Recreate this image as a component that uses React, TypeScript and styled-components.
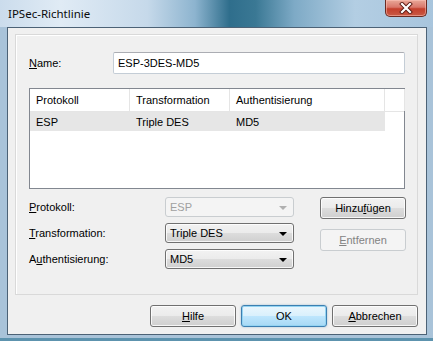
import React from "react"
import styled, { createGlobalStyle } from "styled-components"

const GlobalStyle = createGlobalStyle`
    html, body {
        margin: 0;
        padding: 0;
        background: #ffffff;
    }
    body {
        font-family: "Liberation Sans", Arial, sans-serif;
        font-size: 11px;
        color: #000;
    }
`

const Window = styled.div`
    width: 433px;
    height: 341px;
    box-sizing: border-box;
    display: flex;
    flex-direction: column;
    background-color: #a9c3d9;
    border-bottom: 3px solid #5d93ae;
`

const TitleBar = styled.div`
    position: relative;
    height: 27px;
    display: flex;
    align-items: flex-start;
    justify-content: space-between;
    padding-left: 8px;
    background-color: #c3d7e9;
`

// aero glass streak drawn behind the caption
const Glass = styled.svg`
    position: absolute;
    left: 0;
    top: 0;
    width: 100%;
    height: 100%;
    z-index: 0;
`

const Title = styled.span`
    position: relative;
    z-index: 1;
    font-family: "Noto Sans", "Liberation Sans", sans-serif;
    font-size: 11.5px;
    line-height: 12px;
    margin-top: 8px;
    color: #0c0c0c;
`

const CloseButton = styled.div`
    position: relative;
    z-index: 1;
    width: 42px;
    height: 17px;
    margin-right: 6px;
    box-sizing: border-box;
    border: 1px solid #6b2b22;
    border-top: none;
    border-radius: 0 0 5px 5px;
    background: linear-gradient(180deg, #e9a898 0%, #d9776a 45%, #c43f2c 55%, #c85a45 100%);
    box-shadow: inset 0 0 0 1px rgba(255,200,190,0.5);
    display: flex;
    align-items: center;
    justify-content: center;
`

const ClientArea = styled.div`
    flex: 1;
    margin: 0 6px 3px 7px;
    border: 1px solid #4c6276;
    background: #f0f0f0;
    display: flex;
    flex-direction: column;
    padding: 6px 8px 0 7px;
`

const Panel = styled.div`
    height: 261px;
    box-sizing: border-box;
    border: 1px solid #d9d9d9;
    box-shadow: inset 1px 1px 0 #ffffff;
    background: #f0f0f0;
    padding: 17px 12px 0 13px;
    display: flex;
    flex-direction: column;
`

const NameRow = styled.div`
    display: flex;
    align-items: center;
    height: 22px;
`

const Label = styled.span<{ $width?: number }>`
    width: ${p => p.$width ?? 84}px;
    flex: none;
`

const TextBox = styled.div`
    flex: 1;
    height: 22px;
    box-sizing: border-box;
    border: 1px solid #c4cdd6;
    border-top-color: #abadb3;
    border-radius: 2px;
    background: #fff;
    padding-left: 4px;
    display: flex;
    align-items: center;
`

const ListView = styled.div`
    margin-top: 14px;
    height: 101px;
    box-sizing: border-box;
    border: 1px solid #828790;
    background: #fff;
`

const ListRow = styled.div<{ $header?: boolean }>`
    display: flex;
    height: ${p => p.$header ? 22 : 19}px;
    border-bottom: ${p => p.$header ? "1px solid #e5e5e5" : "none"};
`

const Cell = styled.div<{ $w: number; $header?: boolean; $selected?: boolean }>`
    width: ${p => p.$w}px;
    flex: none;
    box-sizing: border-box;
    padding-left: 6px;
    display: flex;
    align-items: center;
    border-right: ${p => p.$header ? "1px solid #e5e5e5" : "none"};
    background: ${p => p.$selected ? "#e6e6e6" : "transparent"};
`

const Lower = styled.div`
    margin-top: 8px;
    display: flex;
`

const FieldColumn = styled.div`
    display: flex;
    flex-direction: column;
    gap: 6px;
`

const FieldRow = styled.div`
    display: flex;
    align-items: center;
    height: 20px;
`

const Combo = styled.div<{ $disabled?: boolean }>`
    width: 129px;
    height: 20px;
    box-sizing: border-box;
    border: 1px solid ${p => p.$disabled ? "#c9cdd0" : "#707070"};
    border-radius: 3px;
    background: ${p => p.$disabled
        ? "#f4f4f4"
        : "linear-gradient(180deg, #f2f2f2 0%, #ebebeb 50%, #dddddd 50%, #cfcfcf 100%)"};
    box-shadow: ${p => p.$disabled ? "none" : "inset 0 0 0 1px rgba(255,255,255,0.8)"};
    color: ${p => p.$disabled ? "#a0a0a0" : "#000"};
    padding: 0 6px 0 4px;
    display: flex;
    align-items: center;
    justify-content: space-between;
`

const Arrow = styled.span<{ $disabled?: boolean }>`
    width: 0;
    height: 0;
    border-left: 4px solid transparent;
    border-right: 4px solid transparent;
    border-top: 4px solid ${p => p.$disabled ? "#b0b0b0" : "#000"};
    margin-top: 1px;
`

const ButtonColumn = styled.div`
    margin-left: 26px;
    display: flex;
    flex-direction: column;
    gap: 10px;
`

const Button = styled.div<{ $disabled?: boolean; $default?: boolean }>`
    width: 86px;
    height: 22px;
    box-sizing: border-box;
    border-radius: 3px;
    display: flex;
    align-items: center;
    justify-content: center;
    border: 1px solid ${p => p.$disabled ? "#c9cdd0" : p.$default ? "#3c7fb1" : "#707070"};
    background: ${p => p.$disabled
        ? "#f4f4f4"
        : p.$default
            ? "linear-gradient(180deg, #eaf6fd 0%, #d9f0fc 50%, #bee6fd 50%, #a7d9f5 100%)"
            : "linear-gradient(180deg, #f2f2f2 0%, #ebebeb 50%, #dddddd 50%, #cfcfcf 100%)"};
    box-shadow: ${p => p.$disabled
        ? "none"
        : p.$default
            ? "inset 0 0 0 1px #94d4f2, 0 0 2px rgba(60,127,177,0.5)"
            : "inset 0 0 0 1px rgba(255,255,255,0.8)"};
    color: ${p => p.$disabled ? "#838383" : "#000"};
`

const Footer = styled.div`
    display: flex;
    justify-content: flex-end;
    gap: 5px;
    margin-top: 10px;
`

const columns = [
    { title: "Protokoll", w: 100, value: "ESP" },
    { title: "Transformation", w: 100, value: "Triple DES" },
    { title: "Authentisierung", w: 155, value: "MD5" },
]

export default function App() {
    return (
        <>
            <GlobalStyle />
            <Window>
                <TitleBar>
                    <Glass viewBox="0 0 433 27" preserveAspectRatio="none">
                        <defs>
                            <linearGradient id="streak" x1="0" y1="0" x2="1" y2="0">
                                <stop offset="0" stopColor="#cbdcec" />
                                <stop offset="0.14" stopColor="#e0ebf5" />
                                <stop offset="0.34" stopColor="#c6d9ea" />
                                <stop offset="0.45" stopColor="#8db4cf" />
                                <stop offset="0.53" stopColor="#2f6e8c" />
                                <stop offset="0.59" stopColor="#3a7894" />
                                <stop offset="0.68" stopColor="#7eaac6" />
                                <stop offset="0.82" stopColor="#b3cee3" />
                                <stop offset="1" stopColor="#a8c5dd" />
                            </linearGradient>
                        </defs>
                        <rect x="0" y="0" width="433" height="27" fill="url(#streak)" />
                    </Glass>
                    <Title>IPSec-Richtlinie</Title>
                    <CloseButton>
                        <svg width="14" height="12" viewBox="0 0 14 12">
                            <path d="M3 2 L11 10 M11 2 L3 10" stroke="#5a1a12" strokeWidth="4" strokeLinecap="square" />
                            <path d="M3 2 L11 10 M11 2 L3 10" stroke="#ffffff" strokeWidth="2.2" strokeLinecap="square" />
                        </svg>
                    </CloseButton>
                </TitleBar>
                <ClientArea>
                    <Panel>
                        <NameRow>
                            <Label><u>N</u>ame:</Label>
                            <TextBox>ESP-3DES-MD5</TextBox>
                        </NameRow>
                        <ListView>
                            <ListRow $header>
                                {columns.map(c => (
                                    <Cell key={c.title} $w={c.w} $header>{c.title}</Cell>
                                ))}
                                <Cell $w={20} $header />
                            </ListRow>
                            <ListRow>
                                {columns.map(c => (
                                    <Cell key={c.title} $w={c.w} $selected>{c.value}</Cell>
                                ))}
                            </ListRow>
                        </ListView>
                        <Lower>
                            <FieldColumn>
                                <FieldRow>
                                    <Label $width={136}><u>P</u>rotokoll:</Label>
                                    <Combo $disabled>ESP<Arrow $disabled /></Combo>
                                </FieldRow>
                                <FieldRow>
                                    <Label $width={136}><u>T</u>ransformation:</Label>
                                    <Combo>Triple DES<Arrow /></Combo>
                                </FieldRow>
                                <FieldRow>
                                    <Label $width={136}>A<u>u</u>thentisierung:</Label>
                                    <Combo>MD5<Arrow /></Combo>
                                </FieldRow>
                            </FieldColumn>
                            <ButtonColumn>
                                <Button>Hinzu<u>f</u>ügen</Button>
                                <Button $disabled><u>E</u>ntfernen</Button>
                            </ButtonColumn>
                        </Lower>
                    </Panel>
                    <Footer>
                        <Button><u>H</u>ilfe</Button>
                        <Button $default>OK</Button>
                        <Button><u>A</u>bbrechen</Button>
                    </Footer>
                </ClientArea>
            </Window>
        </>
    )
}
